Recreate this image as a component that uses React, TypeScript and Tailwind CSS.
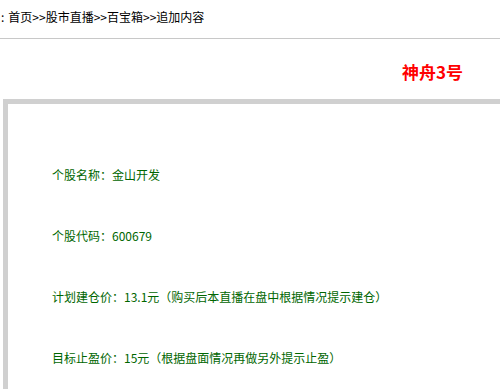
import React from "react";

export default function App() {
  const lines = [
    "个股名称：金山开发",
    "个股代码：600679",
    "计划建仓价：13.1元（购买后本直播在盘中根据情况提示建仓）",
    "目标止盈价：15元（根据盘面情况再做另外提示止盈）",
  ];
  return (
    <div
      className="w-[500px] h-[389px] overflow-hidden bg-white"
      style={{ fontFamily: '"Noto Sans CJK SC", "Noto Sans", sans-serif' }}
    >
      <div className="h-[39px] border-b border-[#c8c8c8] pl-[1px] pt-[8px] text-[12px] leading-[18px] text-black whitespace-nowrap">
        :<span className="ml-[4px]">首页&gt;&gt;股市直播&gt;&gt;百宝箱&gt;&gt;追加内容</span>
      </div>
      <div className="flex justify-end pr-[37px] pt-[23px] h-[60px]">
        <span className="text-[17px] leading-[20px] font-bold text-[#ff0000]">神舟3号</span>
      </div>
      <div className="ml-[3px] w-[600px] h-[400px] border-t-[5px] border-l-[5px] border-[#d0d0d0] pt-[62px] pl-[44px]">
        <div className="flex flex-col gap-[43px] text-[12px] leading-[18px] text-[#006600] whitespace-nowrap">
          {lines.map((l) => (
            <div key={l}>{l}</div>
          ))}
        </div>
      </div>
    </div>
  );
}
